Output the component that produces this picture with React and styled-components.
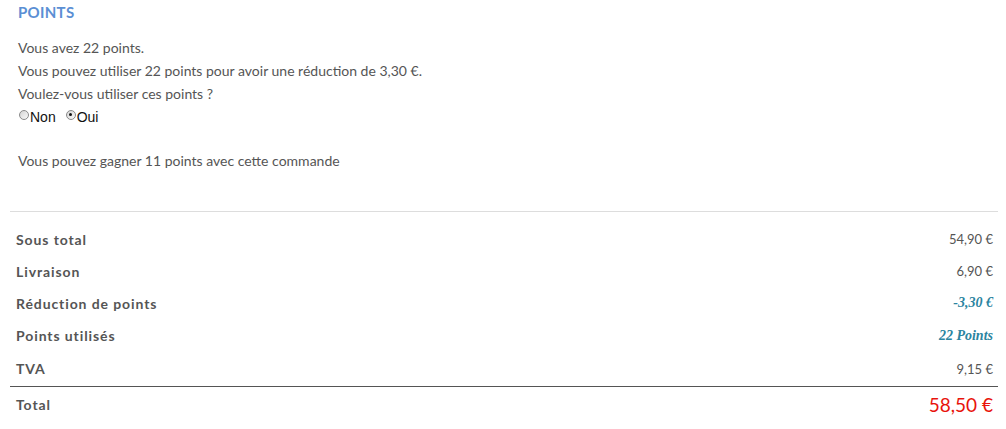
import React from 'react';
import styled, { createGlobalStyle } from 'styled-components';

const GlobalStyle = createGlobalStyle`
  html, body {
    margin: 0;
    padding: 0;
    background: #fff;
  }
  body {
    font-family: Lato, "Open Sans", sans-serif;
    color: #555;
  }
`;

const Page = styled.div`
  width: 1006px;
  height: 429px;
  box-sizing: border-box;
  padding: 0 8px 0 10px;
`;

// Points block
const PointsBox = styled.section`
  padding: 4px 8px 0 8px;
  height: 211px;
  box-sizing: border-box;
`;

const Title = styled.h3`
  margin: 0 0 15px 0;
  font-size: 15px;
  font-weight: 700;
  line-height: 17px;
  color: #5b8fd4;
  letter-spacing: 0.3px;
`;

const Line = styled.p`
  margin: 0;
  font-size: 14px;
  line-height: 23px;
  color: #555;
`;

const RadioRow = styled.div`
  display: flex;
  align-items: center;
  gap: 10px;
  height: 24px;
  margin-bottom: 20px;
  padding-left: 1px;
`;

const RadioLabel = styled.label`
  display: flex;
  align-items: center;
  gap: 1px;
  font-family: "Liberation Sans", Arial, sans-serif;
  font-size: 14px;
  color: #111;
`;

const RadioDot = styled.span`
  position: relative;
  width: 10px;
  height: 10px;
  border-radius: 50%;
  border: 1px solid #8a8a8a;
  background: linear-gradient(135deg, #d4d4d4, #fafafa);
  margin-top: -5px;
  box-sizing: border-box;

  &::after {
    content: '';
    display: ${p => (p.$checked ? 'block' : 'none')};
    position: absolute;
    left: 2.5px;
    top: 2.5px;
    width: 3px;
    height: 3px;
    border-radius: 50%;
    background: #111;
  }
`;

// Totals table
const Totals = styled.div`
  border-top: 1px solid #ddd;
  padding-top: 11px;
`;

const Row = styled.div`
  display: flex;
  align-items: center;
  justify-content: space-between;
  height: ${p => p.$h || 32}px;
  padding: 0 5px 0 6px;
  border-top: ${p => (p.$strong ? '1px solid #555' : 'none')};
`;

const Label = styled.span`
  font-size: 14px;
  font-weight: 700;
  letter-spacing: 0.9px;
  color: #555;
  margin-top: ${p => p.$shift || 0}px;
`;

const Value = styled.span`
  font-size: 13px;
  color: #555;
`;

const PointsValue = styled.span`
  font-family: "Liberation Serif", "Times New Roman", serif;
  font-style: italic;
  font-weight: 700;
  font-size: 14px;
  color: #2b84a0;
  margin-top: ${p => p.$shift || 0}px;
`;

const TotalValue = styled.span`
  font-size: 19px;
  color: #e8140c;
`;

const rows = [
  { label: 'Sous total', value: '54,90 €' },
  { label: 'Livraison', value: '6,90 €' },
  { label: 'Réduction de points', value: '-3,30 €', points: true },
  { label: 'Points utilisés', value: '22 Points', points: true, shift: 2 },
  { label: 'TVA', value: '9,15 €', h: 35 },
];

export default function App() {
  return (
    <Page>
      <GlobalStyle />
      <PointsBox>
        <Title>POINTS</Title>
        <Line>Vous avez 22 points.</Line>
        <Line>Vous pouvez utiliser 22 points pour avoir une réduction de 3,30 €.</Line>
        <Line>Voulez-vous utiliser ces points ?</Line>
        <RadioRow>
          <RadioLabel>
            <RadioDot />
            Non
          </RadioLabel>
          <RadioLabel>
            <RadioDot $checked />
            Oui
          </RadioLabel>
        </RadioRow>
        <Line>Vous pouvez gagner 11 points avec cette commande</Line>
      </PointsBox>
      <Totals>
        {rows.map(r => (
          <Row key={r.label} $h={r.h}>
            <Label>{r.label}</Label>
            {r.points ? (
              <PointsValue $shift={r.shift}>{r.value}</PointsValue>
            ) : (
              <Value>{r.value}</Value>
            )}
          </Row>
        ))}
        <Row $strong $h={35}>
          <Label>Total</Label>
          <TotalValue>58,50 €</TotalValue>
        </Row>
      </Totals>
    </Page>
  );
}
